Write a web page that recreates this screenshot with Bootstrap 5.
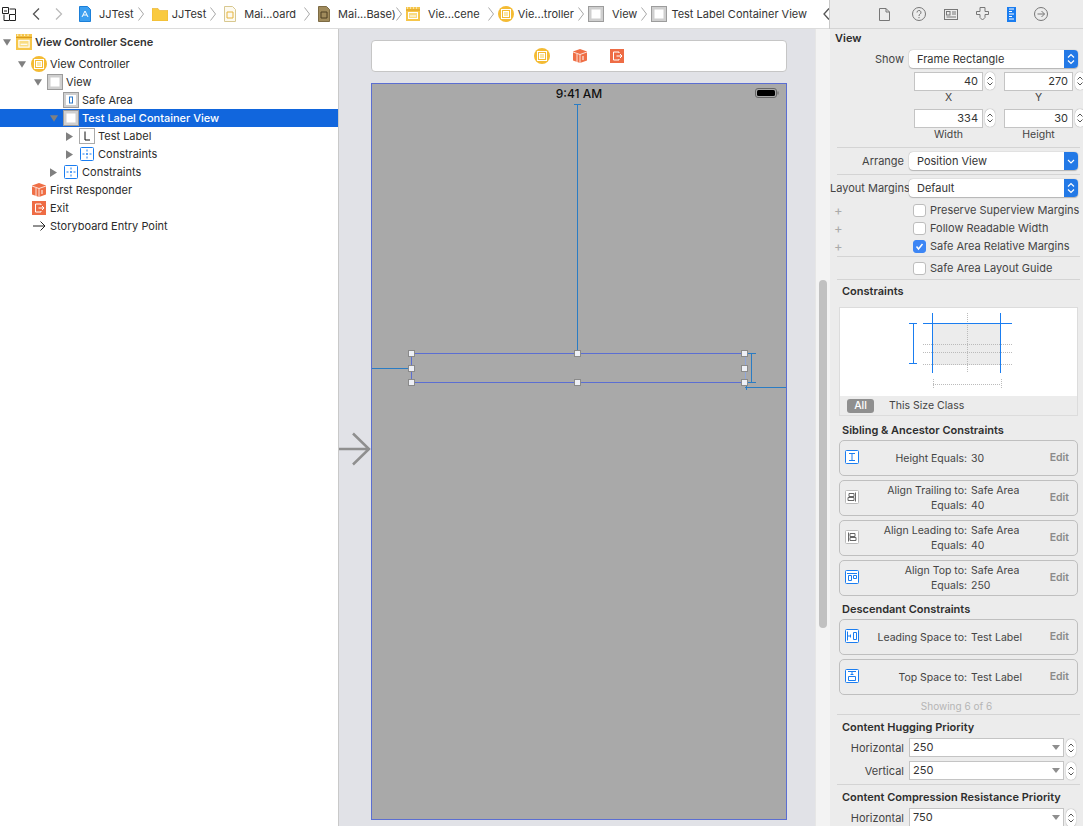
<!DOCTYPE html>
<html lang="en">
<head>
<meta charset="UTF-8">
<title>JJTest - Main.storyboard</title>
<link href="https://cdn.jsdelivr.net/npm/bootstrap@5.3.3/dist/css/bootstrap.min.css" rel="stylesheet">
<style>
    html, body { height: 826px; overflow: hidden; }
    body { font-family: "Inter", "Liberation Sans", sans-serif; font-size: 11px; color: #2b2b2b; background: #fff; line-height: 18px; }
    svg { display: block; flex: none; }

    .xc-shell { width: 1084px; height: 826px; }
    .xc-main { width: 830px; flex: none; }

    /* breadcrumb */
    .xc-crumbs { height: 29px; border-bottom: 1px solid #dcdcdc; padding-left: 2px; white-space: nowrap; flex: none; color: #333; }
    .xc-crumb { gap: 3px; }
    .xc-chev { color: #999; }

    .xc-tree { width: 339px; border-right: 1px solid #c9c9c9; padding-top: 4px; flex: none; }
    .tree-row { height: 18px; }
    .tree-row.is-head { font-weight: 600; margin-bottom: 4px; color: #333; }
    .tree-row.is-on { background: #1166dd; color: #fff; font-weight: 500; }
    .lvl-0 { padding-left: 3px; }
    .lvl-1 { padding-left: 18px; }
    .lvl-2 { padding-left: 34px; }
    .lvl-3 { padding-left: 50px; }
    .lvl-4 { padding-left: 66px; }
    .tree-tri { width: 13px; flex: none; }
    .tree-ico { width: 16px; height: 16px; margin-right: 3px; flex: none; }

    /* canvas */
    .xc-canvas { background: #e1e2e7; width: 476px; flex: none; position: relative; }
    .xc-scroll { width: 15px; background: #f3f3f3; border-left: 1px solid #e6e6e6; flex: none; position: relative; }
    .xc-thumb { position: absolute; left: 3px; right: 3px; top: 251px; height: 348px; background: #c1c1c1; border-radius: 4px; }
    .scene-dock { position: absolute; left: 32px; top: 11px; width: 416px; height: 32px; background: #fff; border: 1px solid #c6c6c6; border-radius: 4px; gap: 23px; }
    .scene-dev { position: absolute; left: 32px; top: 54px; width: 416px; height: 737px; background: #a9a9a9; border: 1px solid #5b6ed2; }
    .dev-time { position: absolute; left: 0; right: 0; top: 1px; text-align: center; font-size: 12px; font-weight: 500; color: #111; }
    .dev-batt { position: absolute; left: 383px; top: 4px; }
    .dev-frame { position: absolute; left: 39px; top: 269px; width: 335px; height: 30px; border: 1px solid #5b6ed2; border-right-color: #8ea6da; }
    .dev-knob { position: absolute; width: 7px; height: 7px; background: #eef0f6; border: 1px solid #8a8a8a; }
    .k-tl { left: -4px; top: -4px; } .k-tc { left: 162px; top: -4px; } .k-tr { left: 329px; top: -4px; }
    .k-ml { left: -4px; top: 11px; } .k-mr { left: 329px; top: 11px; }
    .k-bl { left: -4px; top: 25px; } .k-bc { left: 162px; top: 25px; } .k-br { left: 329px; top: 25px; }
    .dev-over { position: absolute; left: 0; top: 0; }
    .entry-arrow { position: absolute; left: 0; top: 403px; }

    /* inspector */
    .xc-insp { width: 254px; flex: none; background: #ececec; border-left: 1px solid #c9c9c9; margin-left: -1px; color: #333; height: 826px; overflow: hidden; font-size: 11px; }
    .insp-tabs { height: 29px; border-bottom: 1px solid #d4d4d4; gap: 14px; padding-left: 49px; }
    .insp-sep { border-top: 1px solid #d4d4d4; margin-left: 7px; margin-right: 3px; height: 0; }
    .insp-h { font-weight: 600; font-size: 11px; line-height: 14px; color: #2e2e2e; padding-left: 5px; }
    .insp-lbl { width: 79px; text-align: right; padding-right: 5px; flex: none; color: #444; white-space: nowrap; }
    .insp-pop { width: 169px; height: 18px; background: #fff; border-radius: 4px; box-shadow: 0 0 1px 0 #888, 0 1px 1px #bbb; position: relative; padding-left: 8px; line-height: 18px; }
    .insp-pop-btn { position: absolute; right: 0; top: 0; width: 14px; height: 18px; background: #2379e6; border-radius: 0 4px 4px 0; }
    .insp-row { height: 18px; }

    .num-field { width: 69px; height: 19px; background: #fff; border: 1px solid #c4c4c4; text-align: right; padding-right: 4px; line-height: 17px; }
    .step-btn { width: 10px; height: 18px; background: #fff; border-radius: 5px; box-shadow: 0 0 1px #777; margin-left: 2px; flex: none; }
    .num-cap { text-align: center; width: 69px; line-height: 12px; color: #444; margin-top: 1px; font-size: 10.5px; }
    .num-pad { margin-left: 84px; gap: 9px; }

    .chk-row { height: 18px; white-space: nowrap; font-size: 11px; color: #444; }
    .chk-plus { width: 83px; padding-left: 4px; color: #aaa; flex: none; font-size: 13px; }
    .chk-box { width: 13px; height: 13px; background: #fff; border: 1px solid #bdbdbd; border-radius: 3px; margin-right: 4px; flex: none; }
    .chk-box.is-on { background: #3d86f5; border-color: #3d86f5; color: #fff; }

    .cons-box { margin: 9px 5px 0 9px; height: 109px; border: 1px solid #dcdcdc; background: #ececec; }
    .cons-art { height: 88px; background: #fff; }
    .cons-tabs { height: 20px; padding-left: 7px; gap: 15px; font-size: 10.5px; color: #444; }
    .cons-all { background: #8f8f8f; color: #fff; border-radius: 3px; width: 27px; height: 14px; line-height: 14px; text-align: center; font-weight: 500; }

    .cons-card { margin: 0 5px 4px 9px; border: 1px solid #bfbfbf; border-radius: 5px; height: 36px; position: relative; font-size: 10.5px; color: #444; line-height: 15px; }
    .cons-ico { position: absolute; left: 5px; top: 9px; }
    .cons-txt { position: absolute; left: 0; top: 0; bottom: 0; width: 127px; text-align: right; }
    .cons-val { position: absolute; left: 131px; top: 0; bottom: 0; white-space: nowrap; }
    .cons-stack { padding-top: 2px; padding-bottom: 2px; }
    .cons-edit { position: absolute; right: 8px; top: 9px; color: #8a8a8a; font-weight: 600; font-size: 10.5px; }
    .cons-note { text-align: center; color: #b5b5b5; font-size: 10px; line-height: 14px; }

    .prio-drop { width: 155px; height: 19px; background: #fff; border: 1px solid #c4c4c4; padding-left: 3px; line-height: 17px; position: relative; font-size: 11px; }
    .prio-tri { position: absolute; right: 3px; top: 6px; width: 0; height: 0; border-left: 4px solid transparent; border-right: 4px solid transparent; border-top: 5px solid #8e8e8e; }
    .insp-lbl-prio { width: 79px; }
    .mt-s1 { margin-top: 1px; } .mt-s2 { margin-top: 2px; } .mt-s3 { margin-top: 3px; } .mt-s4 { margin-top: 4px; } .mt-s5 { margin-top: 5px; } .mt-s6 { margin-top: 6px; } .mt-s7 { margin-top: 7px; } .mt-s8 { margin-top: 8px; } .mt-s11 { margin-top: 11px; }
</style>
</head>
<body>
<svg width="0" height="0" style="position:absolute">
    <defs>
        <symbol id="i-file" viewBox="0 0 16 16"><path d="M2.5.5h7.5l4 4v11h-11.500z" fill="#fff" stroke="#ccc"/></symbol>
        <symbol id="i-vc" viewBox="0 0 16 16"><circle cx="8" cy="8" r="8" fill="#f4bb33"/><rect x="3.500" y="3.500" width="9" height="9" fill="none" stroke="#fff"/><rect x="5.500" y="5.500" width="5" height="5" fill="#fbe7a8" stroke="#fff"/></symbol>
        <symbol id="i-scene" viewBox="0 0 14 14"><rect width="14" height="14" fill="#f6c64a"/><path d="M0 3h14" stroke="#d99a1c"/><path d="M1 1h1M4 1h1M7 1h1M10 1h1" stroke="#fff"/><rect x="2.500" y="5.500" width="9" height="6" fill="#f9dc82" stroke="#fff"/><path d="M4 9h6" stroke="#fff"/></symbol>
        <symbol id="i-view" viewBox="0 0 16 16"><rect x=".5" y=".5" width="15" height="15" fill="#cfcfcf" stroke="#9c9c9c"/><rect x="3.500" y="3.500" width="9" height="9" fill="#fff"/></symbol>
        <symbol id="i-safe" viewBox="0 0 16 16"><rect x=".5" y=".5" width="15" height="15" fill="#cfcfcf" stroke="#9c9c9c"/><rect x="3" y="3" width="10" height="10" fill="#fff"/><rect x="6.500" y="5" width="3" height="6" fill="#fff" stroke="#2b78c9"/></symbol>
        <symbol id="i-cons" viewBox="0 0 14 14"><rect x=".5" y=".5" width="13" height="13" rx="1" fill="#fff" stroke="#1a7df0"/><path d="M7 2.500v2M7 6v2M7 9.500v2M2.500 7h2M6 7h2M9.500 7h2" stroke="#1a7df0"/></symbol>
        <symbol id="i-cube" viewBox="0 0 14 14"><path d="M7 0l7 2.500v9L7 14 0 11.500v-9z" fill="#ef6f46"/><path d="M0 3l7 2.500L14 3M7 5.500V14M4 5v8" stroke="#fff" stroke-width=".8" fill="none"/><path d="M10 7v4" stroke="#fff"/></symbol>
        <symbol id="i-exit" viewBox="0 0 14 14"><rect width="14" height="14" fill="#ee6c45"/><path d="M9 4V3H3.500v8H9v-1M6.500 7H12M10 5l2 2-2 2" fill="none" stroke="#fff"/></symbol>
        <symbol id="i-tri-d" viewBox="0 0 10 8"><path d="M0 0h10L5 8z" fill="#808080"/></symbol>
        <symbol id="i-tri-r" viewBox="0 0 8 10"><path d="M0 0v10l8-5z" fill="#808080"/></symbol>
        <symbol id="i-chev" viewBox="0 0 6 14"><path d="M.5.500l5 6.500-5 6.500" fill="none" stroke="#a8a8a8"/></symbol>
        <symbol id="i-updown" viewBox="0 0 10 18"><path d="M2.500 7.500L5 5l2.500 2.500M2.500 10.500L5 13l2.500-2.500" fill="none" stroke="#555"/></symbol>
        <symbol id="i-updown-w" viewBox="0 0 14 18"><path d="M4 7.500L7 4.500l3 3M4 10.500l3 3 3-3" fill="none" stroke="#fff" stroke-width="1.200"/></symbol>
        <symbol id="i-card" viewBox="0 0 14 14"><rect x=".5" y=".5" width="13" height="13" rx="2" fill="#fff" stroke="#c4c4c4"/></symbol>
    </defs>
</svg>

<div class="xc-shell d-flex">
    <div class="xc-main d-flex flex-column">
        <div class="xc-crumbs d-flex align-items-center">
            <svg width="14" height="14" viewBox="0 0 14 14" fill="none" stroke="#222"><path d="M.5.5h6v6h-6zM2 7.500v6h5M7.500 2h6v5M7.500 7.500h6v6h-6z M2 4h3"/></svg>
            <svg class="ms-3" width="8" height="12" viewBox="0 0 8 12" fill="none" stroke="#555" stroke-width="1.300"><path d="M7 .5L1.500 6 7 11.500"/></svg>
            <svg style="margin-left:15px" width="8" height="12" viewBox="0 0 8 12" fill="none" stroke="#bbb" stroke-width="1.300"><path d="M1 .5L6.500 6 1 11.500"/></svg>
            <svg class="ms-3" width="12" height="16" viewBox="0 0 12 16"><path d="M.5.5h8l3 3v12H.5z" fill="#3c9ff0" stroke="#1b7fd8"/><path d="M3 11l3-6 3 6M4 9h4" stroke="#fff" fill="none"/></svg>
            <span class="ms-2">JJTest</span>
            <svg class="xc-chev ms-1" width="6" height="14"><use href="#i-chev"/></svg>
            <svg class="ms-2" width="16" height="14" viewBox="0 0 16 14"><path d="M0 1.500h6l1.500 2H16V14H0z" fill="#f9ca3f" stroke="#e9b02b" stroke-width=".6"/></svg>
            <span class="ms-1">JJTest</span>
            <svg class="ms-1" width="6" height="14"><use href="#i-chev"/></svg>
            <svg class="ms-2" width="12" height="16" viewBox="0 0 12 16"><path d="M.5.5h8l3 3v12H.5z" fill="#fdfaf0" stroke="#d8c890"/><path d="M3 6h6v6H3z" fill="none" stroke="#e5b33d"/></svg>
            <span class="ms-2">Mai...oard</span>
            <svg class="ms-2" width="6" height="14"><use href="#i-chev"/></svg>
            <svg class="ms-2" width="12" height="16" viewBox="0 0 12 16"><path d="M.5.5h8l3 3v12H.5z" fill="#a08b5c" stroke="#7d6b44"/><path d="M3 6h6v6H3z" fill="none" stroke="#4d3f22"/></svg>
            <span class="ms-2">Mai...Base)</span>
            <svg class="ms-0" width="6" height="14"><use href="#i-chev"/></svg>
            <svg class="ms-1" width="14" height="14"><use href="#i-scene"/></svg>
            <span class="ms-2">Vie...cene</span>
            <svg class="ms-2" width="6" height="14"><use href="#i-chev"/></svg>
            <svg class="ms-1" width="16" height="16"><use href="#i-vc"/></svg>
            <span class="ms-1">Vie...troller</span>
            <svg class="ms-1" width="6" height="14"><use href="#i-chev"/></svg>
            <svg class="ms-1" width="16" height="16"><use href="#i-view"/></svg>
            <span class="ms-2">View</span>
            <svg class="ms-1" width="6" height="14"><use href="#i-chev"/></svg>
            <svg class="ms-1" width="16" height="16"><use href="#i-view"/></svg>
            <span class="ms-1">Test Label Container View</span>
            <svg class="ms-3" width="7" height="12" viewBox="0 0 7 12" fill="none" stroke="#555" stroke-width="1.300"><path d="M6 .5L1 6l5 5.500"/></svg>
            <svg class="ms-1" width="13" height="12" viewBox="0 0 13 12"><path d="M6.500 0L13 12H0z" fill="#f5b82e"/><path d="M6.500 4v4M6.500 9v1.500" stroke="#fff" stroke-width="1.300"/></svg>
            <svg class="ms-1" width="7" height="12" viewBox="0 0 7 12" fill="none" stroke="#555" stroke-width="1.300"><path d="M1 .5L6 6l-5 5.500"/></svg>
        </div>
        <div class="d-flex flex-grow-1">
            <div class="xc-tree">
                <div class="tree-row is-head lvl-0 d-flex align-items-center"><span class="tree-tri"><svg width="8" height="7"><use href="#i-tri-d"/></svg></span><svg class="tree-ico" width="14" height="14"><use href="#i-scene"/></svg>View Controller Scene</div>
                <div class="tree-row lvl-1 d-flex align-items-center"><span class="tree-tri"><svg width="8" height="7"><use href="#i-tri-d"/></svg></span><svg class="tree-ico"><use href="#i-vc"/></svg>View Controller</div>
                <div class="tree-row lvl-2 d-flex align-items-center"><span class="tree-tri"><svg width="8" height="7"><use href="#i-tri-d"/></svg></span><svg class="tree-ico"><use href="#i-view"/></svg>View</div>
                <div class="tree-row lvl-3 d-flex align-items-center"><span class="tree-tri"></span><svg class="tree-ico"><use href="#i-safe"/></svg>Safe Area</div>
                <div class="tree-row is-on lvl-3 d-flex align-items-center"><span class="tree-tri"><svg width="8" height="7"><use href="#i-tri-d"/></svg></span><svg class="tree-ico"><use href="#i-view"/></svg>Test Label Container View</div>
                <div class="tree-row lvl-4 d-flex align-items-center"><span class="tree-tri"><svg width="7" height="9"><use href="#i-tri-r"/></svg></span><svg class="tree-ico" viewBox="0 0 16 16"><rect x=".5" y=".5" width="15" height="15" fill="#fff" stroke="#aaa"/><path d="M6 3.500V12h5" fill="none" stroke="#111"/></svg>Test Label</div>
                <div class="tree-row lvl-4 d-flex align-items-center"><span class="tree-tri"><svg width="7" height="9"><use href="#i-tri-r"/></svg></span><svg class="tree-ico" viewBox="0 0 16 16"><use href="#i-cons" x="1" y="1" width="14" height="14"/></svg>Constraints</div>
                <div class="tree-row lvl-3 d-flex align-items-center"><span class="tree-tri"><svg width="7" height="9"><use href="#i-tri-r"/></svg></span><svg class="tree-ico" viewBox="0 0 16 16"><use href="#i-cons" x="1" y="1" width="14" height="14"/></svg>Constraints</div>
                <div class="tree-row lvl-1 d-flex align-items-center"><span class="tree-tri"></span><svg class="tree-ico" viewBox="0 0 16 16"><use href="#i-cube" x="1" y="1" width="14" height="14"/></svg>First Responder</div>
                <div class="tree-row lvl-1 d-flex align-items-center"><span class="tree-tri"></span><svg class="tree-ico" viewBox="0 0 16 16"><use href="#i-exit" x="1" y="1" width="14" height="14"/></svg>Exit</div>
                <div class="tree-row lvl-1 d-flex align-items-center"><span class="tree-tri"></span><svg class="tree-ico" viewBox="0 0 16 16" fill="none" stroke="#222"><path d="M2 8h12M9.500 3.500L14 8l-4.500 4.500"/></svg>Storyboard Entry Point</div>
            </div>
            <div class="xc-canvas">
                <div class="scene-dock d-flex align-items-center justify-content-center">
                    <svg width="16" height="16"><use href="#i-vc"/></svg>
                    <svg width="14" height="14"><use href="#i-cube"/></svg>
                    <svg width="14" height="14"><use href="#i-exit"/></svg>
                </div>
                <div class="scene-dev">
                    <div class="dev-time">9:41 AM</div>
                    <svg class="dev-batt" width="24" height="10" viewBox="0 0 24 10"><rect x=".5" y=".5" width="21" height="9" rx="2.500" fill="none" stroke="#666"/><rect x="2" y="2" width="18" height="6" rx="1.500" fill="#000"/><rect x="22.500" y="3.500" width="1" height="3" fill="#666"/></svg>
                    <svg class="dev-over" width="414" height="735" fill="none" stroke="#2a7cc4">
                        <path d="M205.500 20v250M202 20.500h7M0 284.500h40M373 303.500h41M374.500 300v6"/>
                        <path d="M379.500 270v29M375 269.500h9M375 298.500h9"/>
                    </svg>
                    <div class="dev-frame">
                        <span class="dev-knob k-tl"></span><span class="dev-knob k-tc"></span><span class="dev-knob k-tr"></span>
                        <span class="dev-knob k-ml"></span><span class="dev-knob k-mr"></span>
                        <span class="dev-knob k-bl"></span><span class="dev-knob k-bc"></span><span class="dev-knob k-br"></span>
                    </div>
                </div>
                <svg class="entry-arrow" width="32" height="34" viewBox="0 0 32 34" fill="none" stroke="#8f8f8f" stroke-width="2.500"><path d="M0 17h29M14 1.500L30 17 14 32.500"/></svg>
            </div>
            <div class="xc-scroll"><div class="xc-thumb"></div></div>
        </div>
    </div>

    <div class="xc-insp">
        <div class="insp-tabs d-flex align-items-center">
            <svg width="11" height="13" viewBox="0 0 11 13" fill="none" stroke="#777"><path d="M.5.500h6.500l3.500 3.500v8.500H.5zM7 .5V4h3.500"/></svg>
            <svg class="ms-2" width="14" height="14" viewBox="0 0 14 14" fill="none" stroke="#777"><circle cx="7" cy="7" r="6.500"/><path d="M5 5.500a2 2 0 1 1 3 1.700c-.7.400-1 .8-1 1.800M7 10v1.200"/></svg>
            <svg class="ms-1" width="14" height="11" viewBox="0 0 14 11" fill="none" stroke="#777"><rect x=".5" y=".5" width="13" height="10"/><rect x="2.500" y="2.500" width="3.500" height="3.500"/><path d="M8 3h4M8 5h4M2.500 8h9.500"/></svg>
            <svg class="ms-1" width="13" height="14" viewBox="0 0 13 14" fill="none" stroke="#777"><path d="M4 .5h5v4h3.500v3H9v3L6.500 13 4 10.500v-3H.5v-3H4z"/></svg>
            <svg class="ms-1" width="9" height="15" viewBox="0 0 9 15"><rect width="9" height="15" fill="#1a7df0"/><path d="M2 2h5M2 4.500h3M2 7h5M2 9.500h3M2 12h5" stroke="#fff"/></svg>
            <svg class="ms-1" width="14" height="14" viewBox="0 0 14 14" fill="none" stroke="#777"><circle cx="7" cy="7" r="6.500"/><path d="M3.500 7h7M7.500 4l3 3-3 3"/></svg>
        </div>
        <div class="insp-h mt-s2">View</div>
        <div class="insp-row d-flex align-items-center mt-s5"><span class="insp-lbl">Show</span><div class="insp-pop">Frame Rectangle<span class="insp-pop-btn"><svg width="14" height="18"><use href="#i-updown-w"/></svg></span></div></div>
        <div class="d-flex num-pad mt-s4">
            <div><div class="d-flex"><div class="num-field">40</div><span class="step-btn"><svg width="10" height="18"><use href="#i-updown"/></svg></span></div><div class="num-cap">X</div></div>
            <div><div class="d-flex"><div class="num-field">270</div><span class="step-btn"><svg width="10" height="18"><use href="#i-updown"/></svg></span></div><div class="num-cap">Y</div></div>
        </div>
        <div class="d-flex num-pad mt-s5">
            <div><div class="d-flex"><div class="num-field">334</div><span class="step-btn"><svg width="10" height="18"><use href="#i-updown"/></svg></span></div><div class="num-cap">Width</div></div>
            <div><div class="d-flex"><div class="num-field">30</div><span class="step-btn"><svg width="10" height="18"><use href="#i-updown"/></svg></span></div><div class="num-cap">Height</div></div>
        </div>
        <div class="insp-sep mt-s6"></div>
        <div class="insp-row d-flex align-items-center mt-s4"><span class="insp-lbl">Arrange</span><div class="insp-pop">Position View<span class="insp-pop-btn"><svg width="14" height="18" viewBox="0 0 14 18"><path d="M4 8l3 3 3-3" fill="none" stroke="#fff" stroke-width="1.200"/></svg></span></div></div>
        <div class="insp-sep mt-s4"></div>
        <div class="insp-row d-flex align-items-center mt-s4"><span class="insp-lbl">Layout Margins</span><div class="insp-pop">Default<span class="insp-pop-btn"><svg width="14" height="18"><use href="#i-updown-w"/></svg></span></div></div>
        <div class="chk-row d-flex align-items-center mt-s4"><span class="chk-plus">+</span><span class="chk-box"></span>Preserve Superview Margins</div>
        <div class="chk-row d-flex align-items-center"><span class="chk-plus">+</span><span class="chk-box"></span>Follow Readable Width</div>
        <div class="chk-row d-flex align-items-center"><span class="chk-plus">+</span><span class="chk-box is-on"><svg width="11" height="11" viewBox="0 0 11 11" fill="none" stroke="#fff" stroke-width="1.500"><path d="M2.500 5.500l2 2.500 4-5"/></svg></span>Safe Area Relative Margins</div>
        <div class="insp-sep mt-s1"></div>
        <div class="chk-row d-flex align-items-center mt-s2"><span class="chk-plus"></span><span class="chk-box"></span>Safe Area Layout Guide</div>
        <div class="insp-sep mt-s2"></div>
        <div class="insp-h mt-s4 ps-2 ms-1 p-0">Constraints</div>
        <div class="cons-box">
            <div class="cons-art">
                <svg width="238" height="88" viewBox="0 0 238 88" fill="none">
                    <rect x="93" y="16" width="68" height="41" fill="#ececec"/>
                    <g stroke="#bbb" stroke-dasharray="1 1">
                        <path d="M83 36.500h89M83 44.500h89M83 56.500h89M127.500 5v60M93.500 71v10M161.500 71v10M93 76.500h68"/>
                    </g>
                    <g stroke="#1a7df0" stroke-width="1">
                        <path d="M83 15.500h89M92.500 5v60M160.500 5v60"/>
                        <path d="M69 15.500h8M69 55.500h8M73.500 15v41"/>
                    </g>
                </svg>
            </div>
            <div class="cons-tabs d-flex align-items-center"><span class="cons-all">All</span><span>This Size Class</span></div>
        </div>
        <div class="insp-h mt-s7 ps-2 ms-1 p-0">Sibling &amp; Ancestor Constraints</div>
        <div class="cons-card mt-s3">
            <svg class="cons-ico" width="14" height="14" viewBox="0 0 14 14" fill="none"><rect x=".5" y=".5" width="13" height="13" rx="1" fill="#fff" stroke="#1a7df0"/><path d="M4 3.500h6M4 10.500h6M7 3.500v7" stroke="#1a7df0"/></svg>
            <div class="cons-txt d-flex align-items-center justify-content-end">Height Equals:</div><div class="cons-val d-flex align-items-center">30</div><span class="cons-edit">Edit</span>
        </div>
        <div class="cons-card">
            <svg class="cons-ico" width="14" height="14" viewBox="0 0 14 14" fill="none" stroke="#666"><rect x=".5" y=".5" width="13" height="13" rx="1" fill="#fff" stroke="#bbb"/><path d="M10.500 2.500v9M4 3.500h5v3H4zM3 7.500h6v3H3z"/></svg>
            <div class="cons-txt cons-stack d-flex flex-column justify-content-center"><span>Align Trailing to:</span><span>Equals:</span></div><div class="cons-val cons-stack d-flex flex-column justify-content-center"><span>Safe Area</span><span>40</span></div><span class="cons-edit">Edit</span>
        </div>
        <div class="cons-card">
            <svg class="cons-ico" width="14" height="14" viewBox="0 0 14 14" fill="none" stroke="#666"><rect x=".5" y=".5" width="13" height="13" rx="1" fill="#fff" stroke="#bbb"/><path d="M3.500 2.500v9M5 3.500h5v3H5zM5 7.500h6v3H5z"/></svg>
            <div class="cons-txt cons-stack d-flex flex-column justify-content-center"><span>Align Leading to:</span><span>Equals:</span></div><div class="cons-val cons-stack d-flex flex-column justify-content-center"><span>Safe Area</span><span>40</span></div><span class="cons-edit">Edit</span>
        </div>
        <div class="cons-card">
            <svg class="cons-ico" width="14" height="14" viewBox="0 0 14 14" fill="none" stroke="#1a7df0"><rect x=".5" y=".5" width="13" height="13" rx="1" fill="#fff"/><path d="M2 3.500h10M3.500 5.500h3v5h-3zM8.500 5.500h3v3h-3z"/></svg>
            <div class="cons-txt cons-stack d-flex flex-column justify-content-center"><span>Align Top to:</span><span>Equals:</span></div><div class="cons-val cons-stack d-flex flex-column justify-content-center"><span>Safe Area</span><span>250</span></div><span class="cons-edit">Edit</span>
        </div>
        <div class="insp-h mt-s6 ps-2 ms-1 p-0">Descendant Constraints</div>
        <div class="cons-card mt-s3">
            <svg class="cons-ico" width="14" height="14" viewBox="0 0 14 14" fill="none" stroke="#1a7df0"><rect x=".5" y=".5" width="13" height="13" rx="1" fill="#fff"/><path d="M2.500 2.500v9M3 7h3M5.500 5.500v3M8.500 3.500h3v7h-3z"/></svg>
            <div class="cons-txt d-flex align-items-center justify-content-end">Leading Space to:</div><div class="cons-val d-flex align-items-center">Test Label</div><span class="cons-edit">Edit</span>
        </div>
        <div class="cons-card">
            <svg class="cons-ico" width="14" height="14" viewBox="0 0 14 14" fill="none" stroke="#1a7df0"><rect x=".5" y=".5" width="13" height="13" rx="1" fill="#fff"/><path d="M3 2.500h8M7 3v3M5.500 5.500h3M3.500 7.500h7v4h-7z"/></svg>
            <div class="cons-txt d-flex align-items-center justify-content-end">Top Space to:</div><div class="cons-val d-flex align-items-center">Test Label</div><span class="cons-edit">Edit</span>
        </div>
        <div class="cons-note">Showing 6 of 6</div>
        <div class="insp-sep mt-s1"></div>
        <div class="insp-h mt-s5 ps-2 ms-1 p-0">Content Hugging Priority</div>
        <div class="d-flex align-items-center mt-s4"><span class="insp-lbl">Horizontal</span><div class="prio-drop">250<span class="prio-tri"></span></div><span class="step-btn"><svg width="10" height="18"><use href="#i-updown"/></svg></span></div>
        <div class="d-flex align-items-center mt-s4"><span class="insp-lbl">Vertical</span><div class="prio-drop">250<span class="prio-tri"></span></div><span class="step-btn"><svg width="10" height="18"><use href="#i-updown"/></svg></span></div>
        <div class="insp-sep mt-s4"></div>
        <div class="insp-h mt-s5 ps-2 ms-1 p-0">Content Compression Resistance Priority</div>
        <div class="d-flex align-items-center mt-s4"><span class="insp-lbl">Horizontal</span><div class="prio-drop">750<span class="prio-tri"></span></div><span class="step-btn"><svg width="10" height="18"><use href="#i-updown"/></svg></span></div>
    </div>
</div>
<script src="https://cdn.jsdelivr.net/npm/bootstrap@5.3.3/dist/js/bootstrap.bundle.min.js"></script>
</body>
</html>
